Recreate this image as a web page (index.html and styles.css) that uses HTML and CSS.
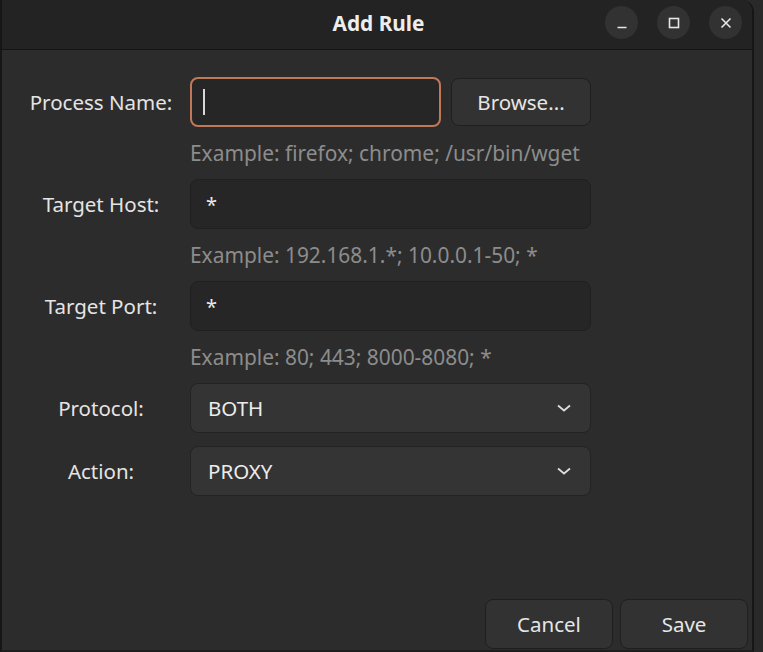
FILE: index.html
```html
<!DOCTYPE html>
<html lang="en">
<head>
<meta charset="utf-8">
<title>Add Rule</title>
<link rel="stylesheet" href="styles.css">
</head>
<body>
<div class="window">
  <header class="titlebar">
    <div class="title">Add Rule</div>
    <div class="wm-buttons">
      <span class="wm-btn"><svg width="14" height="14" viewBox="0 0 14 14"><path d="M2.5 11.5h9" stroke="#e6e6e6" stroke-width="1.6" fill="none"/></svg></span>
      <span class="wm-btn"><svg width="14" height="14" viewBox="0 0 14 14"><rect x="2.5" y="2.5" width="9" height="9" stroke="#e6e6e6" stroke-width="1.6" fill="none"/></svg></span>
      <span class="wm-btn"><svg width="14" height="14" viewBox="0 0 14 14"><path d="M2.5 2.5l9 9M11.5 2.5l-9 9" stroke="#e6e6e6" stroke-width="1.6" fill="none"/></svg></span>
    </div>
  </header>
  <main class="content">
    <div class="form">
      <label class="label">Process Name:</label>
      <div class="field-row">
        <div class="entry entry-focus entry-short"><span class="caret"></span></div>
        <button class="btn browse">Browse...</button>
      </div>
      <div></div>
      <div class="hint">Example: firefox; chrome; /usr/bin/wget</div>

      <label class="label">Target Host:</label>
      <div class="entry">*</div>
      <div></div>
      <div class="hint">Example: 192.168.1.*; 10.0.0.1-50; *</div>

      <label class="label">Target Port:</label>
      <div class="entry">*</div>
      <div></div>
      <div class="hint">Example: 80; 443; 8000-8080; *</div>

      <label class="label">Protocol:</label>
      <div class="combo"><span>BOTH</span><svg class="chev" width="16" height="10" viewBox="0 0 16 10"><path d="M2 2.5l6 5 6-5" stroke="#dcdcdc" stroke-width="1.8" fill="none"/></svg></div>

      <label class="label gap-top">Action:</label>
      <div class="combo gap-top"><span>PROXY</span><svg class="chev" width="16" height="10" viewBox="0 0 16 10"><path d="M2 2.5l6 5 6-5" stroke="#dcdcdc" stroke-width="1.8" fill="none"/></svg></div>
    </div>
    <div class="actions">
      <button class="btn action">Cancel</button>
      <button class="btn action">Save</button>
    </div>
  </main>
</div>
</body>
</html>
```

FILE: styles.css
```css
html, body {
  margin: 0;
  padding: 0;
  background: #292929;
  width: 763px;
  height: 652px;
  overflow: hidden;
  font-family: "Noto Sans", "Open Sans", sans-serif;
  color: #e8e8e8;
}

.window {
  width: 754px;
  height: 652px;
  border-left: 2px solid #161616;
  border-right: 2px solid #161616;
  border-bottom: 2px solid #1e1e1e;
  border-top-right-radius: 12px;
  background: #2c2c2c;
  display: flex;
  flex-direction: column;
  box-sizing: border-box;
  overflow: hidden;
}

.titlebar {
  height: 49px;
  flex: 0 0 49px;
  background: #232323;
  border-bottom: 1px solid #131313;
  position: relative;
  display: flex;
  align-items: center;
  justify-content: center;
}

.title {
  font-weight: 700;
  font-size: 20.8px;
  color: #eeeeee;
  margin-left: 3px;
  margin-top: -4px;
}

.wm-buttons {
  position: absolute;
  right: 10px;
  top: 6px;
  display: flex;
  gap: 19px;
}

.wm-btn {
  width: 33px;
  height: 33px;
  border-radius: 50%;
  background: #323232;
  display: flex;
  align-items: center;
  justify-content: center;
}

.content {
  flex: 1;
  display: flex;
  flex-direction: column;
  justify-content: space-between;
  padding: 27px 4px 1px 27px;
}

.form {
  display: grid;
  grid-template-columns: 144px 401px;
  column-gap: 17px;
  align-items: center;
}

.label {
  text-align: center;
  font-size: 20.5px;
  color: #e4e4e4;
  white-space: nowrap;
}

.field-row {
  display: flex;
  gap: 10px;
  align-items: center;
}

.entry {
  height: 50px;
  box-sizing: border-box;
  background: #262626;
  border: 1px solid #202020;
  border-radius: 8px;
  padding: 0 15px;
  display: flex;
  align-items: center;
  font-size: 20px;
  color: #eaeaea;
}

.entry-short {
  width: 251px;
}

.entry-focus {
  border: 2px solid #c07858;
  padding-left: 11px;
}

.caret {
  width: 2px;
  height: 26px;
  background: #d8d8d8;
}

.btn {
  font-family: inherit;
  font-size: 20.5px;
  color: #e6e6e6;
  background: #323232;
  border: 1px solid #1f1f1f;
  border-radius: 8px;
  cursor: default;
}

.browse {
  width: 140px;
  height: 48px;
}

.hint {
  font-size: 20.9px;
  color: #8c8c8c;
  line-height: 22px;
  margin: 15px 0 15px;
  white-space: nowrap;
}

.combo {
  height: 50px;
  box-sizing: border-box;
  background: #343434;
  border: 1px solid #232323;
  border-radius: 8px;
  padding: 0 18px 0 17px;
  display: flex;
  align-items: center;
  justify-content: space-between;
  font-size: 20.5px;
  color: #ececec;
}

.gap-top {
  margin-top: 13px;
}

.actions {
  display: flex;
  justify-content: flex-end;
  gap: 7px;
}

.action {
  width: 128px;
  height: 50px;
}
```
